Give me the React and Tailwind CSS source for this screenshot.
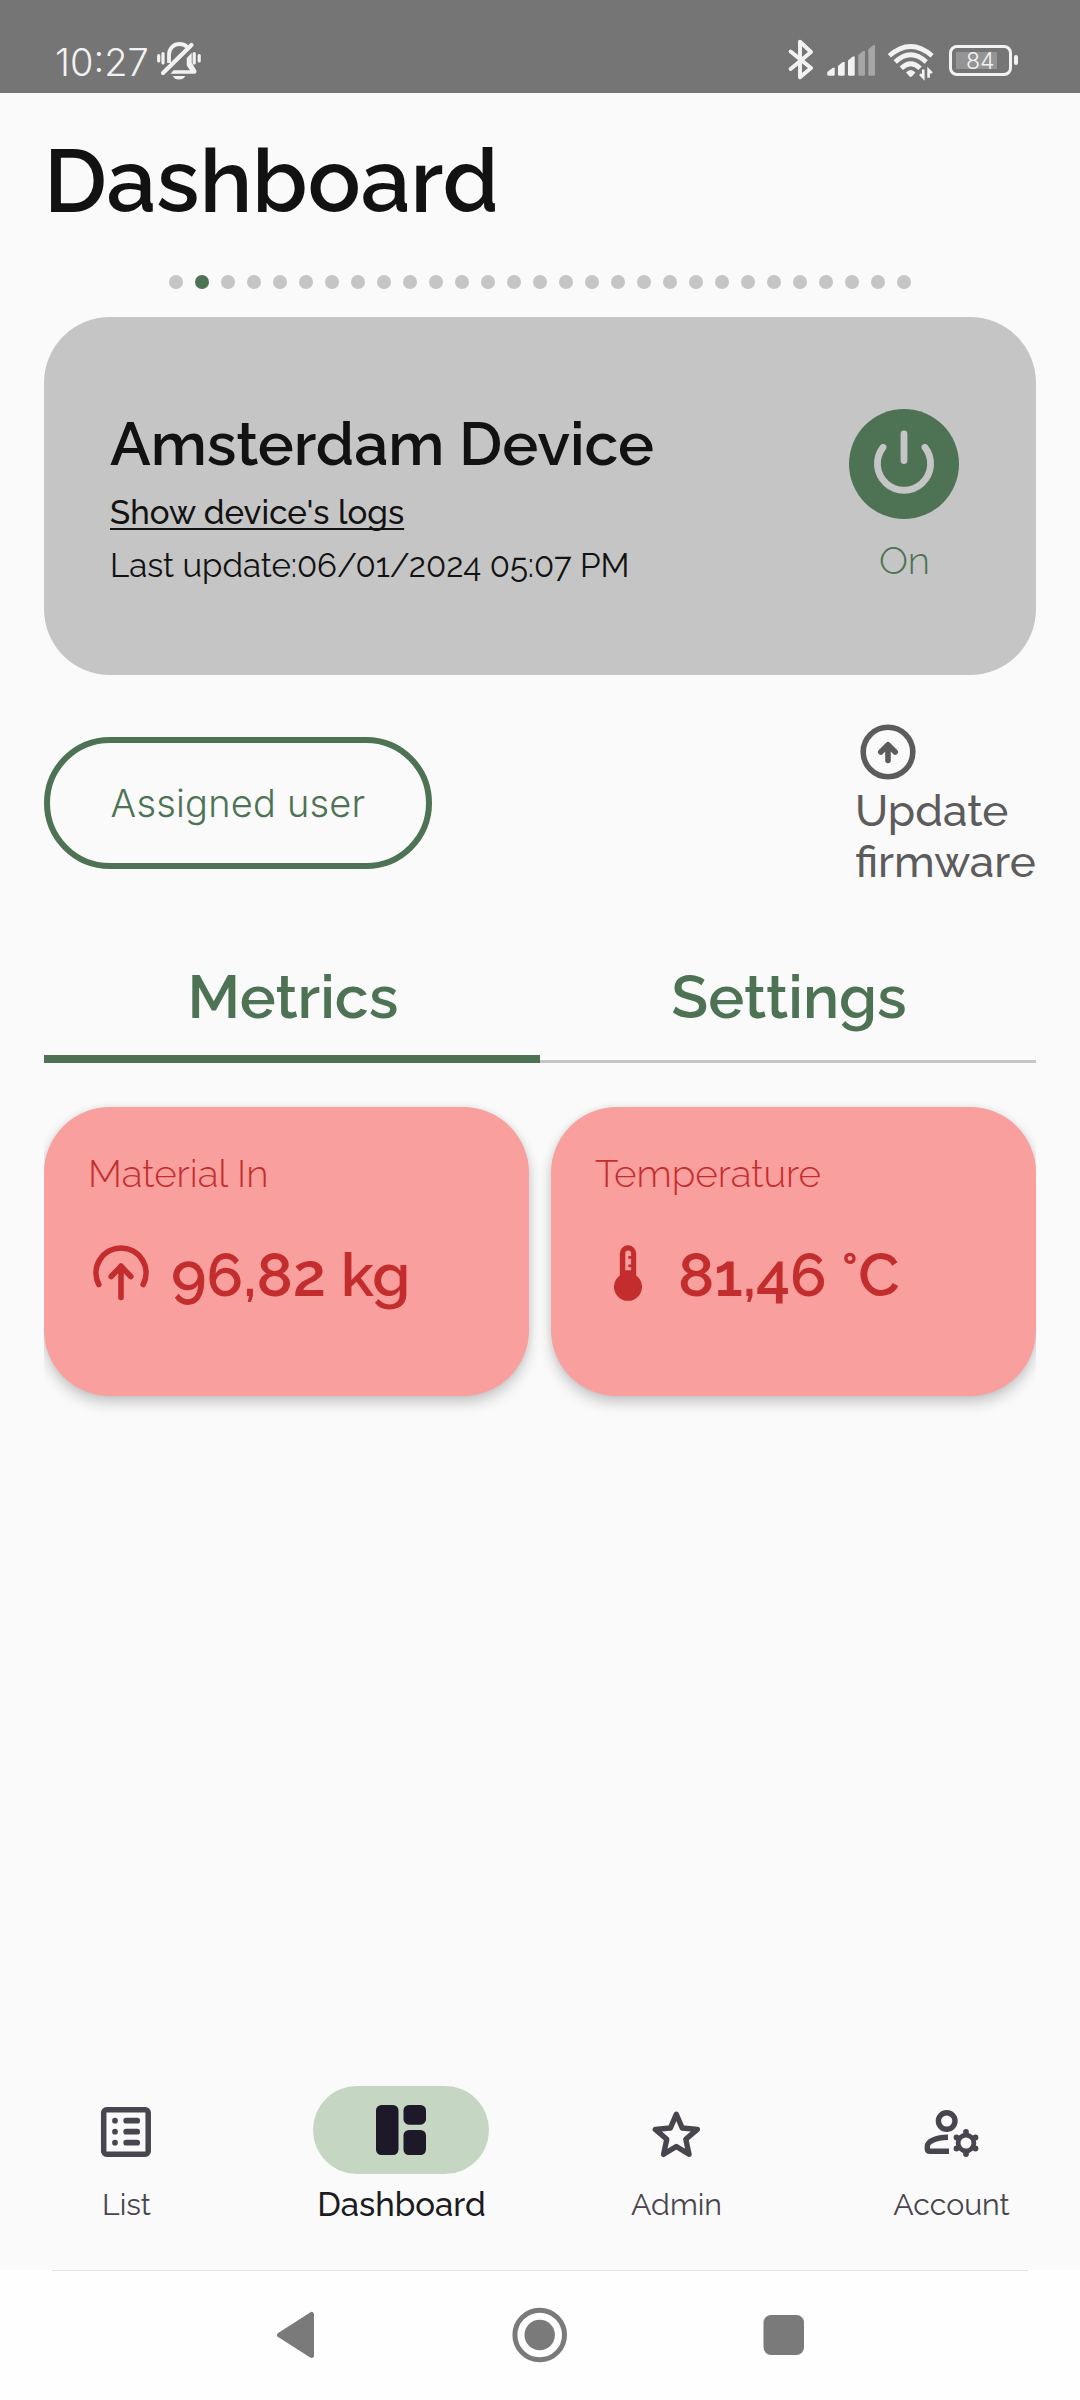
import React from "react";

const DOT_COUNT = 29;
const ACTIVE_DOT = 1;

function BellOffIcon() {
  return (
    <svg width="46" height="42" viewBox="0 0 46 42" className="mt-[40px]" fill="none" stroke="#f2f2f2" strokeLinecap="round">
      <path d="M2.7 15.5v5.5M7 13.5v9.5M38.2 13.5v9.5M43.2 15.5v5.5" strokeWidth="3.2" />
      <path d="M13 23V15C13 8 18 4 23.5 4c3 0 5.5 1 7.500 2.700" strokeWidth="3.8" strokeLinecap="butt" />
      <path d="M7 33L35.5 5" strokeWidth="4.2" />
      <path d="M30.7 18.3L35.7 12.7V22.5L40.3 30.5C41 32 40 33.7 38.5 33.7H14.5L17.5 30.3H34L30.7 25.5Z" fill="#f2f2f2" stroke="none" />
      <path d="M16.7 36h12.6c-2 4.8-10.6 4.8-12.6 0z" fill="#f2f2f2" stroke="none" />
    </svg>
  );
}

function RadioIcons() {
  return (
    <svg width="150" height="42" viewBox="787 39 150 42" className="mt-[39px]" fill="none" stroke="#f2f2f2">
      <path d="M790.6 51.5L811 68L800 77.2V41.8L811 52L790.6 69" strokeWidth="4" strokeLinecap="round" strokeLinejoin="round" />
      <g stroke="none" fill="#f2f2f2">
        <path d="M827.3 72l5.5-4.3h1.9V74.2q0 1.5-1.5 1.5h-4.4q-1.5 0-1.5-1.5z" />
        <path d="M838 66l4.8-4h1.9V74.2q0 1.5-1.5 1.5h-3.7q-1.5 0-1.5-1.5z" />
        <path d="M848 60.5l4.8-4h1.9V74.2q0 1.5-1.5 1.5h-3.7q-1.5 0-1.5-1.5z" />
      </g>
      <g stroke="none" fill="#a6a6a6">
        <path d="M858.3 55l4.8-4h1.9V74.2q0 1.5-1.5 1.5h-3.7q-1.5 0-1.5-1.5z" />
        <path d="M868.3 49.3l4.8-4h1.9V74.2q0 1.5-1.5 1.5h-3.7q-1.5 0-1.5-1.5z" />
      </g>
      <path d="M889.3 55.8Q910.7 37.2 932.1 55.8M895.2 62Q910.7 47.5 926.2 62M901.3 68.2Q910.7 59.2 920.1 68.2" strokeWidth="4.8" />
      <path d="M906 72.5q4.7-5.2 9.4 0l-3.3 3.7q-1.4 1.2-2.8 0z" fill="#f2f2f2" stroke="none" />
      <path d="M923.3 69.5v8l-3.3-3.3M928.6 77.8v-8l3.3 3.3" strokeWidth="2.6" />
    </svg>
  );
}

function StatusBar() {
  return (
    <div className="flex h-[93px] items-start justify-between bg-[#757575] pl-[55px] pr-[62px] font-['Inter',sans-serif] text-[#f2f2f2]">
      <div className="flex items-start">
        <span className="mt-[39px] w-[101px] text-[38px] font-light leading-[46px]">10:27</span>
        <BellOffIcon />
      </div>
      <div className="flex items-start">
        <RadioIcons />
        <div className="ml-[12px] mt-[45px] h-[31px] w-[63px] rounded-[8px] border-3 border-[#f2f2f2] p-[4px]">
          <div className="h-full w-[41px] bg-[#949494] pl-[10px] text-[23px] font-light leading-[18px]">84</div>
        </div>
        <div className="ml-[2px] mt-[55px] h-[10px] w-[4px] rounded-[2px] bg-[#f2f2f2]" />
      </div>
    </div>
  );
}

function PageDots() {
  return (
    <div className="mt-[42px] flex justify-center gap-[12px]">
      {Array.from({ length: DOT_COUNT }, (_, i) => (
        <div key={i} className={i === ACTIVE_DOT ? "size-[14px] rounded-full bg-[#4d7354]" : "size-[14px] rounded-full bg-[#c5c5c5]"} />
      ))}
    </div>
  );
}

function DeviceCard() {
  return (
    <div className="mx-[44px] mt-[28px] flex h-[358px] items-start justify-between rounded-[66px] bg-[#c5c5c5] pl-[66px] pr-[77px] text-[#121212]">
      <div className="pt-[91px]">
        <h2 className="text-[60.5px] font-semibold leading-[72px] tracking-[-0.12px]">Amsterdam Device</h2>
        <p className="mt-[13px] text-[33px] font-medium leading-[40px] tracking-[0.08px] underline decoration-[2px] underline-offset-[4px] [text-decoration-skip-ink:none]">Show device's logs</p>
        <p className="mt-[13px] text-[33px] font-[370] leading-[40px] tracking-[-0.03px]">Last update:06/01/2024 05:07 PM</p>
      </div>
      <div className="flex flex-col items-center pt-[92px]">
        <svg width="110" height="110" viewBox="0 0 110 110" fill="none" stroke="#c5c5c5" strokeWidth="6.8" strokeLinecap="round">
          <circle cx="55" cy="55" r="55" fill="#4d7354" stroke="none" />
          <path d="M55 25v26.5M34 38.3a26.6 26.6 0 1 0 42 0" />
        </svg>
        <span className="ml-[1px] mt-[19px] text-[38.5px] font-[350] leading-[46px] text-[#4d7354]">On</span>
      </div>
    </div>
  );
}

function ActionsRow() {
  return (
    <div className="mx-[44px] mt-[49px] flex h-[163px] items-start justify-between">
      <div className="mt-[13px] flex h-[132px] w-[388px] items-center justify-center rounded-[66px] border-6 border-[#4d7354] pt-[1px] font-['Inter',sans-serif] text-[38px] font-light tracking-[0.2px] text-[#4d7354]">
        Assigned user
      </div>
      <div className="w-[182px] text-[#5c5c5c]">
        <svg width="56" height="56" viewBox="0 0 56 56" className="ml-[6px]" fill="none" stroke="#5c5c5c" strokeLinecap="round" strokeLinejoin="round">
          <circle cx="28" cy="28" r="24.8" strokeWidth="5.6" />
          <path d="M28 36.5V21M20.8 28L28 20.8L35.2 28" strokeWidth="5.6" />
        </svg>
        <p className="ml-[1px] mt-[5px] w-[181px] text-[44px] font-medium leading-[51px]">Update firmware</p>
      </div>
    </div>
  );
}

function Tabs() {
  return (
    <div className="mx-[44px] mt-[74px] grid h-[102px] grid-cols-2 text-center text-[60.5px] font-semibold leading-[72px] text-[#4d7354]">
      <div className="border-b-8 border-[#4d7354] pl-[2px]">Metrics</div>
      <div className="border-b-3 border-[#c5c5c5] pl-[2px]">Settings</div>
    </div>
  );
}

function MaterialInIcon() {
  return (
    <svg width="66" height="66" viewBox="0 0 66 66" fill="none" stroke="#c42d2d" strokeLinecap="round" strokeLinejoin="round">
      <path d="M10.8 42.500A25 25 0 1 1 55.2 42.500" strokeWidth="5.6" />
      <path d="M33 55.5V24M23.2 34.5L33 24.3L42.8 34.5" strokeWidth="5.6" />
    </svg>
  );
}

function ThermometerIcon() {
  return (
    <svg width="66" height="66" viewBox="0 0 66 66" fill="#c42d2d">
      <path d="M24.8 11.5a8.2 8.2 0 0 1 16.4 0V33.5a14 14 0 1 1-16.4 0z" />
      <path d="M30.3 28.3V11.5a2.9 2.9 0 0 1 5.8 0v2.5h-2.8v2.7h2.8v5.8h-2.8v2.7h2.8v3.1z" fill="#f99f9d" />
    </svg>
  );
}

function MetricCard({ title, value, icon }) {
  return (
    <div className="h-[289px] rounded-[66px] bg-[#f99f9d] px-[44px] pt-[44px] text-[#c42d2d] shadow-[0_7px_14px_rgba(0,0,0,0.2),0_0_6px_rgba(0,0,0,0.07)]">
      <p className="text-[38.5px] font-[350] leading-[46px]">{title}</p>
      <div className="mt-[42px] flex items-center gap-[17px]">
        {icon}
        <span className="text-[60.5px] font-semibold leading-[72px] tracking-[-0.1px]">{value}</span>
      </div>
    </div>
  );
}

function ListIcon() {
  return (
    <svg width="66" height="66" viewBox="0 0 66 66" fill="none" stroke="#49454e" strokeLinecap="round">
      <rect x="10.7" y="12.7" width="44.5" height="44.6" rx="3" strokeWidth="5.5" />
      <path d="M22 23.700h.01M22 34.700h.01M22 45.700h.01M33.2 23.700h11M33.2 34.700h11M33.2 45.700h11" strokeWidth="5.7" />
    </svg>
  );
}

function DashboardIcon() {
  return (
    <svg width="66" height="66" viewBox="0 0 66 66" fill="#1d1929">
      <rect x="8" y="8" width="22.5" height="50" rx="5.5" />
      <rect x="35.5" y="8" width="22.5" height="19.7" rx="5.5" />
      <rect x="35.5" y="33" width="22.5" height="25" rx="5.5" />
    </svg>
  );
}

function StarIcon() {
  return (
    <svg width="66" height="66" viewBox="0 0 66 66" fill="none" stroke="#49454e" strokeWidth="5.4" strokeLinejoin="round">
      <path d="M33.3 17.2L39.2 31L54.3 32.4L42.8 42.2L46 57.3L33.3 49.5L20.6 57.3L23.8 42.2L12.3 32.4L27.4 31Z" />
    </svg>
  );
}

function AccountIcon() {
  return (
    <svg width="66" height="66" viewBox="0 0 66 66" fill="none" stroke="#49454e" strokeWidth="5.4">
      <circle cx="28.7" cy="24" r="8.3" />
      <path d="M30 40.3C18 40.5 9.3 44 9.3 49.5v2q0 2.8 2.8 2.8H31" />
      <circle cx="48" cy="46" r="7.9" strokeWidth="4.8" />
      <path d="M48 35v.01M48 57v.01M38.5 40.5v.01M57.5 40.5v.01M38.5 51.5v.01M57.5 51.5v.01" strokeWidth="5.8" strokeLinecap="round" />
    </svg>
  );
}

const NAV = [
  { label: "List", icon: <ListIcon /> },
  { label: "Dashboard", icon: <DashboardIcon />, active: true },
  { label: "Admin", icon: <StarIcon /> },
  { label: "Account", icon: <AccountIcon /> },
];

function BottomNav() {
  return (
    <nav className="mt-auto grid h-[184px] grid-cols-4 gap-[22px] pr-[2px]">
      {NAV.map(({ label, icon, active }) => (
        <div key={label} className="flex flex-col items-center">
          <div className={active ? "mr-[1px] flex h-[88px] w-[176px] items-center justify-center rounded-full bg-[#c5d7c3]" : "mr-[1px] flex h-[88px] w-[176px] items-center justify-center"}>
            {icon}
          </div>
          <span className={active ? "mt-[13px] text-[33px] font-medium leading-[36px] text-[#1c1b1f]" : "mt-[13px] text-[30.25px] font-[370] leading-[36px] text-[#49454e]"}>
            {label}
          </span>
        </div>
      ))}
    </nav>
  );
}

function SystemNav() {
  return (
    <div className="h-[130px] bg-[#fefefe]">
      <div className="mx-[52px] h-px bg-[#e3e3e3]" />
      <div className="flex h-[128px] items-center justify-center gap-[184px]">
        <svg width="60" height="60" viewBox="0 0 60 60" fill="#7a7a7a" stroke="#7a7a7a" strokeWidth="5" strokeLinejoin="round">
          <path d="M13.5 30L45.500 9.500V50.500Z" />
        </svg>
        <svg width="60" height="60" viewBox="0 0 60 60" fill="none" stroke="#7a7a7a" strokeWidth="5">
          <circle cx="29.7" cy="30" r="24.8" />
          <circle cx="29.7" cy="30" r="15.2" fill="#7a7a7a" stroke="none" />
        </svg>
        <svg width="60" height="60" viewBox="0 0 60 60" fill="#7a7a7a">
          <rect x="9.5" y="10" width="40.5" height="40" rx="7.5" />
        </svg>
      </div>
    </div>
  );
}

export default function App() {
  return (
    <div className="flex h-[2400px] w-[1080px] flex-col overflow-hidden bg-[#fafafa] font-['Raleway','Lato',sans-serif] font-normal">
      <StatusBar />
      <h1 className="ml-[44px] mt-[36px] text-[88px] font-semibold leading-[104px] tracking-[0.1px] text-[#121212]">Dashboard</h1>
      <PageDots />
      <DeviceCard />
      <ActionsRow />
      <Tabs />
      <div className="mx-[44px] mt-[44px] grid grid-cols-2 gap-[22px] overflow-x-clip">
        <MetricCard title="Material In" value="96,82 kg" icon={<MaterialInIcon />} />
        <MetricCard title="Temperature" value="81,46 °C" icon={<ThermometerIcon />} />
      </div>
      <BottomNav />
      <SystemNav />
    </div>
  );
}
